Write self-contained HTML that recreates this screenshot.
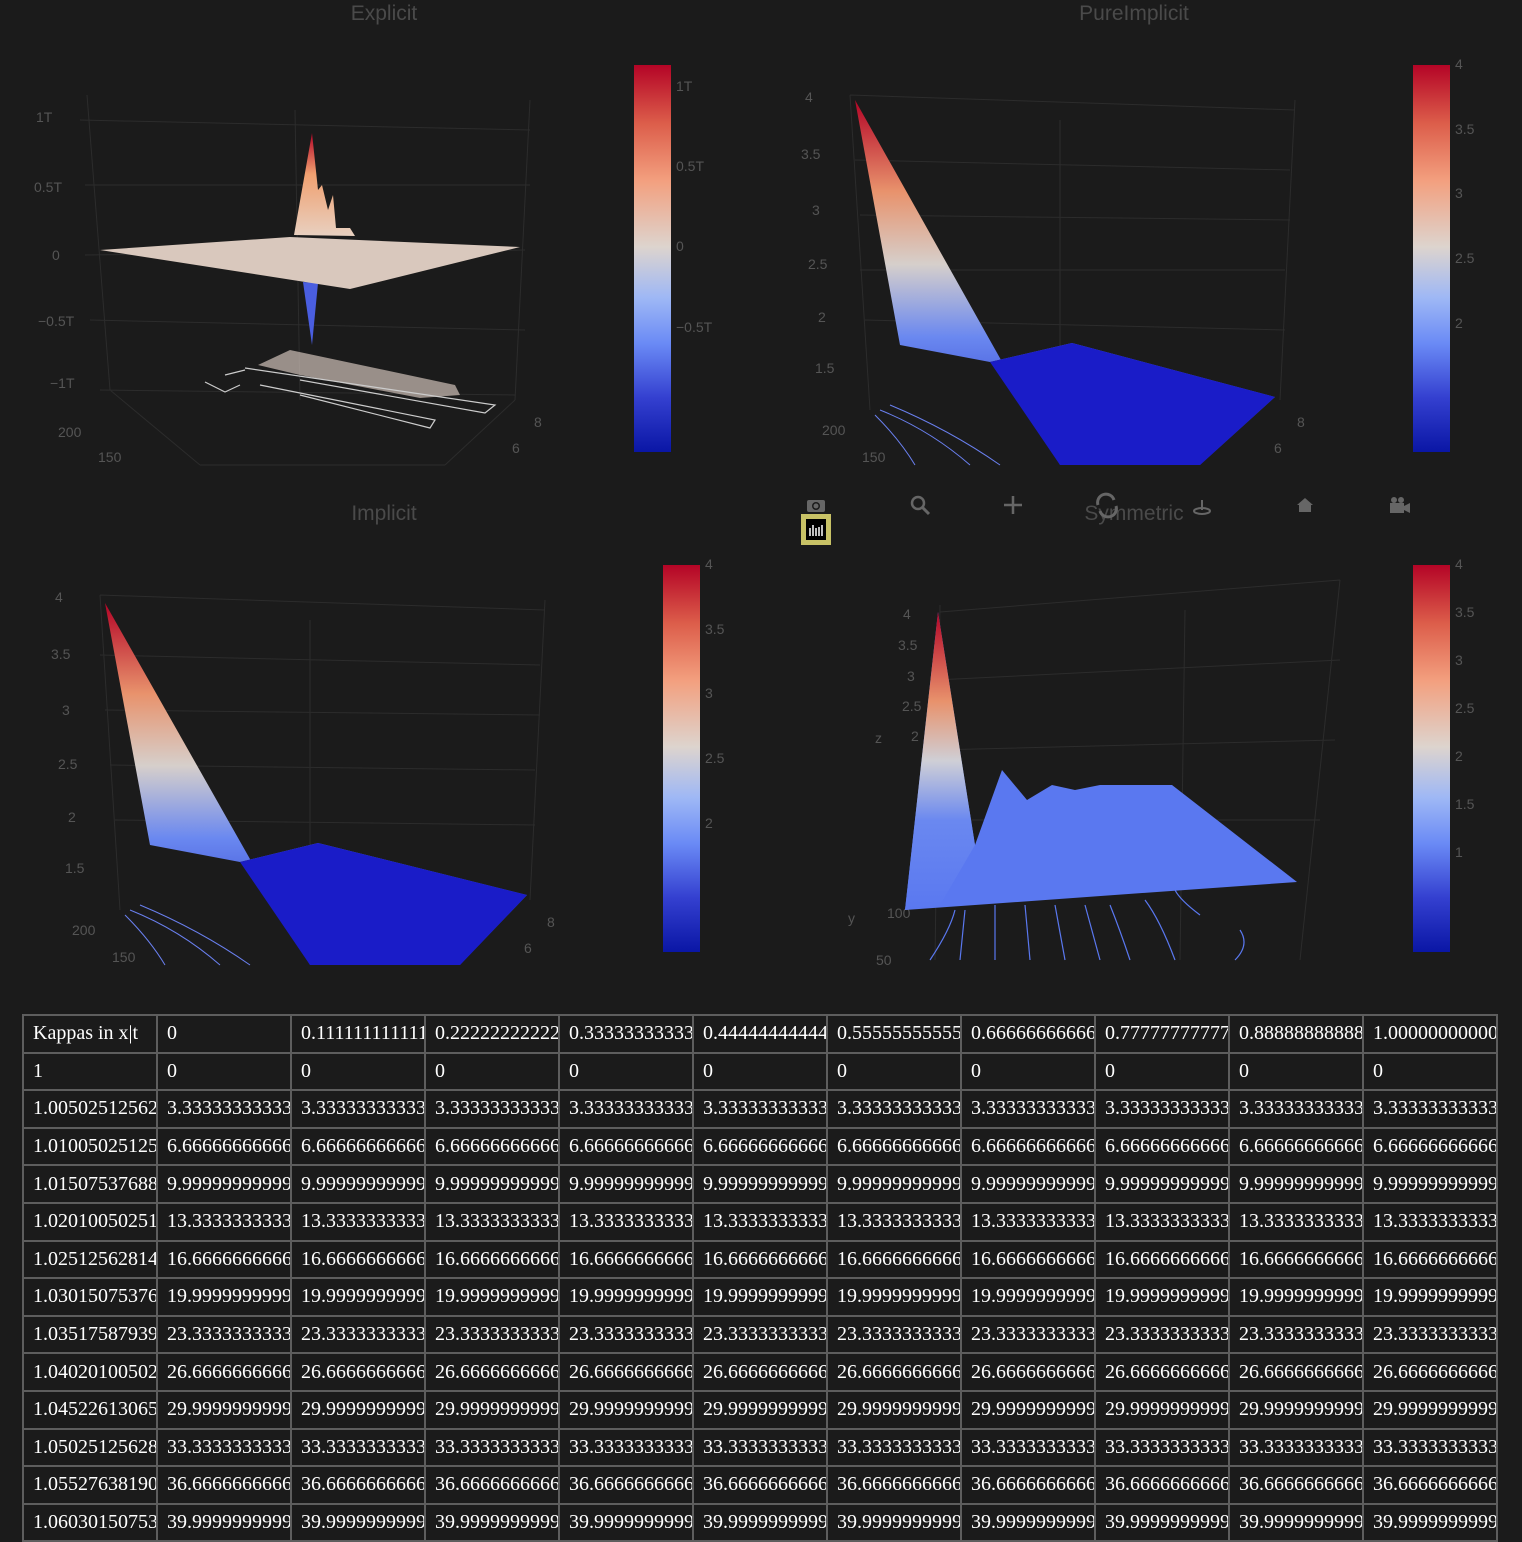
<!DOCTYPE html>
<html><head><meta charset="utf-8"><style>
body{margin:0;background:#1b1b1b;width:1522px;height:1542px;overflow:hidden;position:relative;font-family:"Liberation Sans",sans-serif}
svg{position:absolute;left:0;top:0}
table{position:absolute;left:22px;top:1014px;border-collapse:collapse;font-family:"Liberation Serif",serif;font-size:20px;color:#fff;table-layout:fixed;width:1476px}
col{width:134px}
td{box-sizing:border-box;border:2px solid #5e5e5e;height:37.6px;padding:0 0 0 9px;white-space:nowrap;overflow:hidden}
</style></head><body>
<svg width="1522" height="1000" viewBox="0 0 1522 1000" font-family="Liberation Sans, sans-serif">
<defs>
<linearGradient id="cb" x1="0" y1="0" x2="0" y2="1">
<stop offset="0" stop-color="#b40426"/><stop offset="0.15" stop-color="#dc5d4a"/><stop offset="0.3" stop-color="#f3a07f"/>
<stop offset="0.47" stop-color="#ddd4ce"/><stop offset="0.6" stop-color="#9fb8f5"/><stop offset="0.72" stop-color="#6a8af5"/>
<stop offset="0.86" stop-color="#3440d0"/><stop offset="1" stop-color="#0a16a5"/></linearGradient>
<linearGradient id="sf" x1="0" y1="0" x2="0" y2="1">
<stop offset="0" stop-color="#b40426"/><stop offset="0.25" stop-color="#e8926c"/><stop offset="0.45" stop-color="#d6cfcb"/>
<stop offset="0.65" stop-color="#6a88f0"/><stop offset="1" stop-color="#1a22c0"/></linearGradient>
<linearGradient id="sf2" x1="0" y1="0" x2="0" y2="1">
<stop offset="0" stop-color="#b40426"/><stop offset="0.3" stop-color="#e8926c"/><stop offset="0.5" stop-color="#cfcfd6"/>
<stop offset="0.7" stop-color="#6a88f0"/><stop offset="1" stop-color="#5a78f0"/></linearGradient>
<linearGradient id="sp" x1="0" y1="0" x2="0" y2="1">
<stop offset="0" stop-color="#b40426"/><stop offset="0.4" stop-color="#f0a070"/><stop offset="1" stop-color="#e8d0c0"/></linearGradient>
</defs>
<g fill="#4a4a4a" font-size="21" text-anchor="middle">
<text x="384" y="20">Explicit</text><text x="1134" y="20">PureImplicit</text>
<text x="384" y="520">Implicit</text><text x="1134" y="520">Symmetric</text></g>
<g stroke="#2c2c2c" stroke-width="1" fill="none">
<path d="M87 95 L110 390 M295 110 L300 400 M530 100 L515 400 M80 120 L530 130 M85 185 L530 185 M85 255 L525 250 M90 320 L525 330 M100 390 L515 395 M110 390 L200 465 M515 400 L445 465 M200 465 L445 465"/>
<path d="M850 95 L870 410 M1060 120 L1060 380 M1295 100 L1280 400 M850 95 L1295 110 M855 160 L1290 170 M860 215 L1290 220 M860 270 L1285 270 M865 320 L1285 330"/>
<path d="M100 595 L120 910 M310 620 L310 900 M545 600 L530 900 M100 595 L545 610 M100 655 L540 665 M105 710 L540 715 M110 765 L535 770 M115 820 L535 825"/>
<path d="M940 605 L935 960 M1185 610 L1180 960 M1340 580 L1300 960 M940 612 L1340 580 M935 680 L1340 660 M935 750 L1335 740 M930 820 L1320 820"/>
</g>
<g fill="#555" font-size="14">
<text x="36" y="122">1T</text><text x="34" y="192">0.5T</text><text x="52" y="260">0</text><text x="38" y="326">−0.5T</text><text x="50" y="388">−1T</text>
<text x="58" y="437">200</text><text x="98" y="462">150</text><text x="534" y="427">8</text><text x="512" y="453">6</text>
<text x="805" y="102">4</text><text x="801" y="159">3.5</text><text x="812" y="215">3</text><text x="808" y="269">2.5</text><text x="818" y="322">2</text><text x="815" y="373">1.5</text>
<text x="822" y="435">200</text><text x="862" y="462">150</text><text x="1297" y="427">8</text><text x="1274" y="453">6</text>
<text x="55" y="602">4</text><text x="51" y="659">3.5</text><text x="62" y="715">3</text><text x="58" y="769">2.5</text><text x="68" y="822">2</text><text x="65" y="873">1.5</text>
<text x="72" y="935">200</text><text x="112" y="962">150</text><text x="547" y="927">8</text><text x="524" y="953">6</text>
<text x="903" y="619">4</text><text x="898" y="650">3.5</text><text x="907" y="681">3</text><text x="902" y="711">2.5</text><text x="911" y="741">2</text><text x="875" y="743">z</text>
<text x="887" y="918">100</text><text x="848" y="923">y</text><text x="876" y="965">50</text>
<text x="676" y="91">1T</text><text x="676" y="171">0.5T</text><text x="676" y="251">0</text><text x="676" y="332">−0.5T</text>
<text x="1455" y="69">4</text><text x="1455" y="134">3.5</text><text x="1455" y="198">3</text><text x="1455" y="263">2.5</text><text x="1455" y="328">2</text>
<text x="705" y="569">4</text><text x="705" y="634">3.5</text><text x="705" y="698">3</text><text x="705" y="763">2.5</text><text x="705" y="828">2</text>
<text x="1455" y="569">4</text><text x="1455" y="617">3.5</text><text x="1455" y="665">3</text><text x="1455" y="713">2.5</text><text x="1455" y="761">2</text><text x="1455" y="809">1.5</text><text x="1455" y="857">1</text>
</g>
<rect x="634" y="65" width="37" height="387" fill="url(#cb)"/>
<rect x="1413" y="65" width="37" height="387" fill="url(#cb)"/>
<rect x="663" y="565" width="37" height="387" fill="url(#cb)"/>
<rect x="1413" y="565" width="37" height="387" fill="url(#cb)"/>
<path d="M294 235 L312 133 L318 190 L322 185 L328 210 L333 195 L336 228 L350 228 L355 236 Z" fill="url(#sp)"/>
<path d="M303 282 L318 283 L312 345 Z" fill="#4a5ee0"/>
<path d="M100 250 L290 237 L520 247 L350 289 Z" fill="#d9c8bd"/>
<path d="M258 365 L290 350 L455 385 L460 395 L420 398 L300 375 Z" fill="#cfc0b8" opacity="0.7"/>
<path d="M205 382 L225 392 L240 385 M225 375 L245 370 M245 368 L495 405 L485 413 L300 380 M260 385 L435 420 L430 428 L300 395" stroke="#ccc" stroke-width="1.2" fill="none"/>
<path d="M855 100 L900 345 L990 362 L1072 343 L1275 397 L1200 465 L1060 465 Z" fill="url(#sf)"/>
<path d="M990 362 L1072 343 L1275 397 L1200 465 L1060 465 Z" fill="#1a1cc8"/>
<path d="M880 410 Q930 430 970 465 M890 405 Q950 430 1000 465 M875 415 Q900 440 915 465" stroke="#6a80f0" fill="none"/>
<path d="M105 603 L150 845 L240 862 L318 843 L527 895 L460 965 L310 965 Z" fill="url(#sf)"/>
<path d="M240 862 L318 843 L527 895 L460 965 L310 965 Z" fill="#1a1cc8"/>
<path d="M130 910 Q180 930 220 965 M140 905 Q200 930 250 965 M125 915 Q150 940 165 965" stroke="#6a80f0" fill="none"/>
<path d="M938 612 L975 845 L1002 770 L1027 800 L1052 785 L1075 790 L1100 785 L1172 785 L1297 882 L905 910 Z" fill="#5a78f0"/>
<path d="M938 612 L975 845 L940 905 L905 910 Z" fill="url(#sf2)"/>
<path d="M930 960 Q950 930 955 910 M960 960 L965 910 M995 960 L995 905 M1030 960 L1025 905 M1065 960 L1055 905 M1100 960 L1085 905 M1130 960 Q1120 930 1110 905 M1175 960 Q1160 920 1145 900 M1200 915 Q1180 900 1175 890 M1235 960 Q1250 945 1240 930" stroke="#5a78f0" fill="none" stroke-width="1.2"/>
<g fill="#666">
<rect x="807" y="500" width="18" height="12" rx="2"/><circle cx="816" cy="506" r="4" fill="#1b1b1b"/><circle cx="816" cy="506" r="2.5"/>
<circle cx="918" cy="503" r="6" fill="none" stroke="#666" stroke-width="2.5"/><path d="M922 507 L929 514" stroke="#666" stroke-width="3"/>
<path d="M1013 496 L1013 514 M1004 505 L1022 505" stroke="#666" stroke-width="2.5"/>
<path d="M1098 505 A8 8 0 0 1 1114 500 M1116 506 A8 8 0 0 1 1100 511" stroke="#666" stroke-width="3" fill="none"/>
<path d="M1202 500 L1202 510" stroke="#666" stroke-width="2"/><ellipse cx="1202" cy="511" rx="8" ry="3" fill="none" stroke="#666" stroke-width="2"/>
<path d="M1297 505 L1305 498 L1313 505 L1311 505 L1311 512 L1299 512 L1299 505 Z"/>
<rect x="1390" y="503" width="14" height="10"/><path d="M1404 506 L1410 503 L1410 513 L1404 510Z"/><circle cx="1394" cy="500" r="3"/><circle cx="1401" cy="500" r="3"/>
</g>
<rect x="801" y="514" width="30" height="31" fill="#c8c266"/>
<rect x="806" y="519" width="20" height="21" fill="#000"/>
<path d="M810 528 v8 M813 525 v11 M816 528 v8 M819 527 v9 M822 525 v11" stroke="#fff" stroke-width="1.5"/>
</svg>
<table>
<colgroup><col><col><col><col><col><col><col><col><col><col><col></colgroup>
<tr><td>Kappas in x|t</td><td>0</td><td>0.111111111111</td><td>0.222222222222</td><td>0.333333333333</td><td>0.444444444444</td><td>0.555555555555</td><td>0.666666666666</td><td>0.777777777777</td><td>0.888888888888</td><td>1.00000000000</td></tr>
<tr><td>1</td><td>0</td><td>0</td><td>0</td><td>0</td><td>0</td><td>0</td><td>0</td><td>0</td><td>0</td><td>0</td></tr>
<tr><td>1.00502512562</td><td>3.33333333333</td><td>3.33333333333</td><td>3.33333333333</td><td>3.33333333333</td><td>3.33333333333</td><td>3.33333333333</td><td>3.33333333333</td><td>3.33333333333</td><td>3.33333333333</td><td>3.33333333333</td></tr>
<tr><td>1.01005025125</td><td>6.66666666666</td><td>6.66666666666</td><td>6.66666666666</td><td>6.66666666666</td><td>6.66666666666</td><td>6.66666666666</td><td>6.66666666666</td><td>6.66666666666</td><td>6.66666666666</td><td>6.66666666666</td></tr>
<tr><td>1.01507537688</td><td>9.99999999999</td><td>9.99999999999</td><td>9.99999999999</td><td>9.99999999999</td><td>9.99999999999</td><td>9.99999999999</td><td>9.99999999999</td><td>9.99999999999</td><td>9.99999999999</td><td>9.99999999999</td></tr>
<tr><td>1.02010050251</td><td>13.3333333333</td><td>13.3333333333</td><td>13.3333333333</td><td>13.3333333333</td><td>13.3333333333</td><td>13.3333333333</td><td>13.3333333333</td><td>13.3333333333</td><td>13.3333333333</td><td>13.3333333333</td></tr>
<tr><td>1.02512562814</td><td>16.6666666666</td><td>16.6666666666</td><td>16.6666666666</td><td>16.6666666666</td><td>16.6666666666</td><td>16.6666666666</td><td>16.6666666666</td><td>16.6666666666</td><td>16.6666666666</td><td>16.6666666666</td></tr>
<tr><td>1.03015075376</td><td>19.9999999999</td><td>19.9999999999</td><td>19.9999999999</td><td>19.9999999999</td><td>19.9999999999</td><td>19.9999999999</td><td>19.9999999999</td><td>19.9999999999</td><td>19.9999999999</td><td>19.9999999999</td></tr>
<tr><td>1.03517587939</td><td>23.3333333333</td><td>23.3333333333</td><td>23.3333333333</td><td>23.3333333333</td><td>23.3333333333</td><td>23.3333333333</td><td>23.3333333333</td><td>23.3333333333</td><td>23.3333333333</td><td>23.3333333333</td></tr>
<tr><td>1.04020100502</td><td>26.6666666666</td><td>26.6666666666</td><td>26.6666666666</td><td>26.6666666666</td><td>26.6666666666</td><td>26.6666666666</td><td>26.6666666666</td><td>26.6666666666</td><td>26.6666666666</td><td>26.6666666666</td></tr>
<tr><td>1.04522613065</td><td>29.9999999999</td><td>29.9999999999</td><td>29.9999999999</td><td>29.9999999999</td><td>29.9999999999</td><td>29.9999999999</td><td>29.9999999999</td><td>29.9999999999</td><td>29.9999999999</td><td>29.9999999999</td></tr>
<tr><td>1.05025125628</td><td>33.3333333333</td><td>33.3333333333</td><td>33.3333333333</td><td>33.3333333333</td><td>33.3333333333</td><td>33.3333333333</td><td>33.3333333333</td><td>33.3333333333</td><td>33.3333333333</td><td>33.3333333333</td></tr>
<tr><td>1.05527638190</td><td>36.6666666666</td><td>36.6666666666</td><td>36.6666666666</td><td>36.6666666666</td><td>36.6666666666</td><td>36.6666666666</td><td>36.6666666666</td><td>36.6666666666</td><td>36.6666666666</td><td>36.6666666666</td></tr>
<tr><td>1.06030150753</td><td>39.9999999999</td><td>39.9999999999</td><td>39.9999999999</td><td>39.9999999999</td><td>39.9999999999</td><td>39.9999999999</td><td>39.9999999999</td><td>39.9999999999</td><td>39.9999999999</td><td>39.9999999999</td></tr>
</table>
</body></html>
